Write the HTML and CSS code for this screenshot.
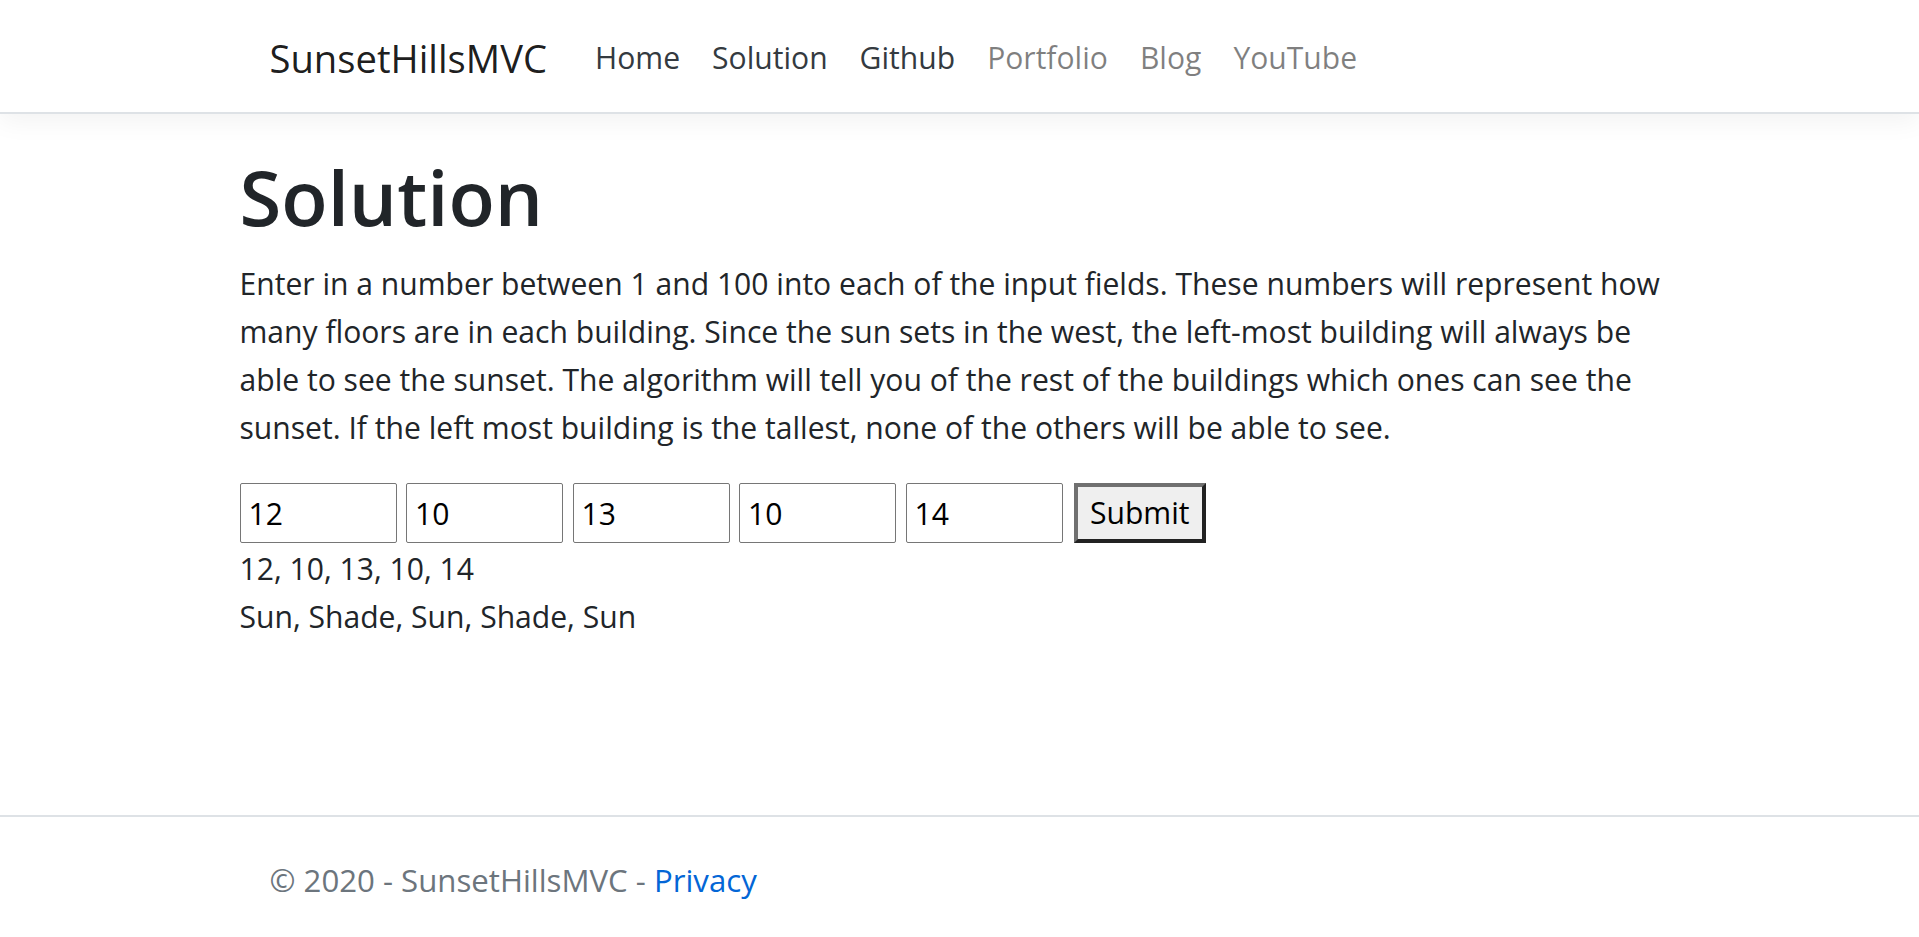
FILE: index.html
```html
<!DOCTYPE html>
<html lang="en">
<head>
<meta charset="utf-8">
<title>Solution - SunsetHillsMVC</title>
<link rel="stylesheet" href="styles.css">
</head>
<body>
<header class="navbar">
  <div class="nav-inner">
    <a class="brand" href="#">SunsetHillsMVC</a>
    <ul class="nav">
      <li><a class="nav-link" href="#">Home</a></li>
      <li><a class="nav-link" href="#">Solution</a></li>
      <li><a class="nav-link" href="#">Github</a></li>
      <li><a class="nav-link muted" href="#">Portfolio</a></li>
      <li><a class="nav-link muted" href="#">Blog</a></li>
      <li><a class="nav-link muted" href="#">YouTube</a></li>
    </ul>
  </div>
</header>
<main class="main">
  <h1 class="title">Solution</h1>
  <p class="lead">Enter in a number between 1 and 100 into each of the input fields. These numbers will represent how many floors are in each building. Since the sun sets in the west, the left-most building will always be able to see the sunset. The algorithm will tell you of the rest of the buildings which ones can see the sunset. If the left most building is the tallest, none of the others will be able to see.</p>
  <form class="row-form">
    <input class="num" type="text" value="12">
    <input class="num" type="text" value="10">
    <input class="num" type="text" value="13">
    <input class="num" type="text" value="10">
    <input class="num" type="text" value="14">
    <button class="submit" type="button">Submit</button>
  </form>
  <div class="result">12, 10, 13, 10, 14</div>
  <div class="result">Sun, Shade, Sun, Shade, Sun</div>
</main>
<footer class="footer">
  <div class="footer-inner">© 2020 - SunsetHillsMVC - <a class="privacy" href="#">Privacy</a></div>
</footer>
</body>
</html>
```
FILE: styles.css
```css
html, body {
  margin: 0;
  padding: 0;
}
body {
  font-family: "Open Sans", "Noto Sans", sans-serif;
  font-size: 30.1px;
  line-height: 48px;
  color: #212529;
  background: #fff;
  min-height: 100vh;
  display: flex;
  flex-direction: column;
}
.navbar {
  height: 112px;
  border-bottom: 2px solid #dee2e6;
  box-shadow: 0 8px 24px rgba(0, 0, 0, 0.05);
  background: #fff;
  display: flex;
  align-items: center;
}
.nav-inner {
  width: 1440px;
  margin: 0 auto;
  padding: 3px 30px 0;
  box-sizing: border-box;
  display: flex;
  align-items: center;
}
.brand {
  font-size: 38.2px;
  line-height: 60px;
  color: rgba(0, 0, 0, 0.9);
  text-decoration: none;
  margin-right: 32px;
}
.nav {
  display: flex;
  list-style: none;
  margin: 0;
  padding: 0;
}
.nav-link {
  display: block;
  padding: 0 16px;
  color: #343a40;
  text-decoration: none;
}
.nav-link.muted {
  color: rgba(0, 0, 0, 0.5);
}
.main {
  width: 1440px;
  margin: 35px auto 0;
}
.title {
  font-size: 76px;
  font-weight: 600;
  line-height: 96px;
  margin: 0 0 15px;
  color: #212529;
}
.lead {
  margin: 0 0 31px;
}
.row-form {
  display: flex;
  gap: 9.5px;
  margin: 0 0 2px;
}
.num {
  width: 157px;
  height: 60px;
  box-sizing: border-box;
  border: 1px solid #767676;
  border-radius: 2px;
  padding: 0 8px;
  font: inherit;
  color: #000;
  background: #fff;
}
.submit {
  height: 60px;
  box-sizing: border-box;
  border-style: solid;
  border-width: 4px;
  border-color: #707070 #222 #222 #707070;
  background: #efefef;
  padding: 0 12px;
  font: inherit;
  color: #000;
  margin-left: 2px;
}
.footer {
  margin-top: auto;
  border-top: 2px solid #dee2e6;
  height: 120px;
  color: #6c757d;
  white-space: nowrap;
}
.footer-inner {
  width: 1440px;
  margin: 0 auto;
  padding: 6px 30px 0;
  font-size: 31.2px;
  line-height: 114px;
  box-sizing: border-box;
}
.privacy {
  color: #0366d6;
  text-decoration: none;
}
```
